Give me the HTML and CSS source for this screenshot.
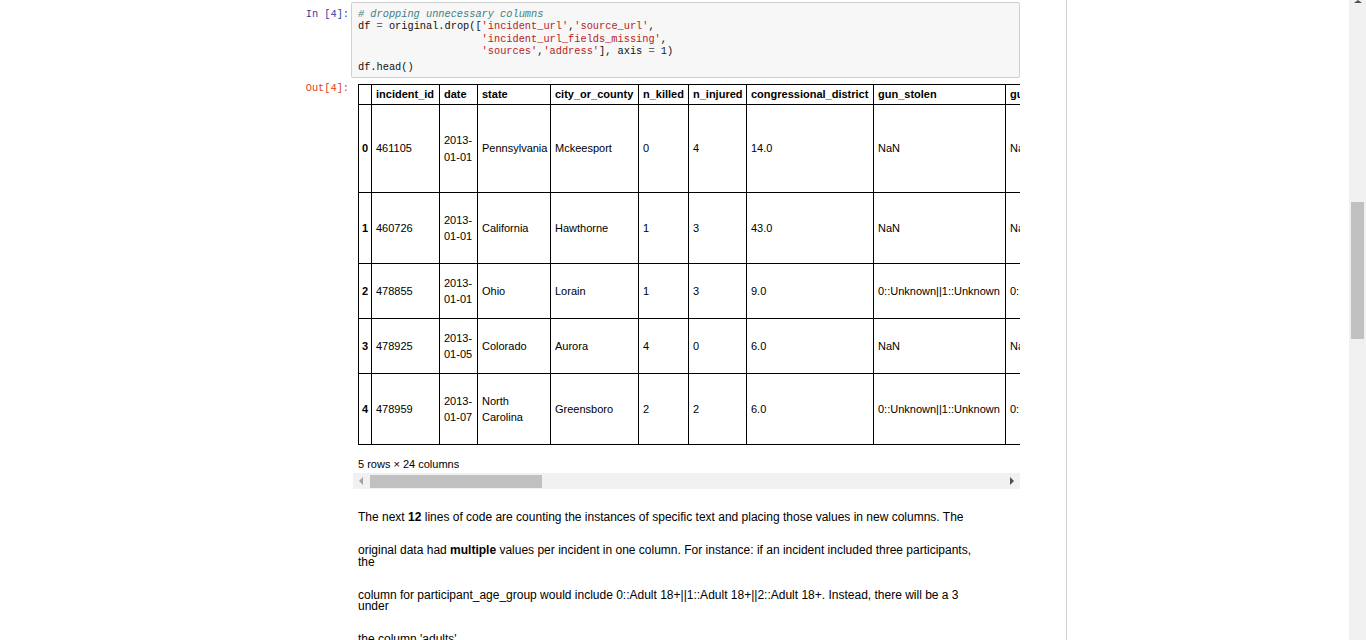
FILE: index.html
```html
<!DOCTYPE html>
<html lang="en">
<head>
<meta charset="utf-8">
<title>Notebook</title>
<link rel="stylesheet" href="styles.css">
</head>
<body>
<div class="screen">
  <div class="page">
    <div class="notebook">
      <div class="cell code-cell">
        <div class="row">
          <div class="prompt in-prompt">In&nbsp;[4]:</div>
          <div class="input-area"><pre><span class="c-com"># dropping unnecessary columns</span>
df <span class="c-op">=</span> original.drop([<span class="c-str">'incident_url'</span>,<span class="c-str">'source_url'</span>,
                    <span class="c-str">'incident_url_fields_missing'</span>,
                    <span class="c-str">'sources'</span>,<span class="c-str">'address'</span>], axis <span class="c-op">=</span> <span class="c-num">1</span>)<span class="last">df.head()</span></pre></div>
        </div>
        <div class="row output">
          <div class="prompt out-prompt">Out[4]:</div>
          <div class="output-area">
            <div class="df-scroll">
              <table class="dataframe">
                <colgroup>
                  <col class="w-idx"><col class="w-id"><col class="w-date"><col class="w-state"><col class="w-city"><col class="w-kill"><col class="w-inj"><col class="w-cong"><col class="w-stolen"><col class="w-type"><col class="w-lat">
                </colgroup>
                <thead>
                  <tr><th class="idx"></th><th>incident_id</th><th>date</th><th>state</th><th>city_or_county</th><th>n_killed</th><th>n_injured</th><th>congressional_district</th><th>gun_stolen</th><th>gun_type</th><th>latitude</th></tr>
                </thead>
                <tbody>
                  <tr><th class="idx">0</th><td>461105</td><td>2013-<wbr>01-01</td><td>Pennsylvania</td><td>Mckeesport</td><td>0</td><td>4</td><td>14.0</td><td>NaN</td><td>NaN</td><td>40.3467</td></tr>
                  <tr><th class="idx">1</th><td>460726</td><td>2013-<wbr>01-01</td><td>California</td><td>Hawthorne</td><td>1</td><td>3</td><td>43.0</td><td>NaN</td><td>NaN</td><td>33.9090</td></tr>
                  <tr><th class="idx">2</th><td>478855</td><td>2013-<wbr>01-01</td><td>Ohio</td><td>Lorain</td><td>1</td><td>3</td><td>9.0</td><td>0::Unknown||1::Unknown</td><td>0::Unknown||1::Unknown</td><td>41.4455</td></tr>
                  <tr><th class="idx">3</th><td>478925</td><td>2013-<wbr>01-05</td><td>Colorado</td><td>Aurora</td><td>4</td><td>0</td><td>6.0</td><td>NaN</td><td>NaN</td><td>39.6518</td></tr>
                  <tr><th class="idx">4</th><td>478959</td><td>2013-<wbr>01-07</td><td>North Carolina</td><td>Greensboro</td><td>2</td><td>2</td><td>6.0</td><td>0::Unknown||1::Unknown</td><td>0::Handgun||1::Handgun</td><td>36.1140</td></tr>
                </tbody>
              </table>
              <p class="df-shape">5 rows × 24 columns</p>
            </div>
            <div class="hscroll">
              <div class="hs-btn"><span class="arrow-left"></span></div>
              <div class="hs-thumb"></div>
              <div class="hs-btn hs-end"><span class="arrow-right"></span></div>
            </div>
          </div>
        </div>
      </div>
      <div class="row md-cell">
        <div class="prompt"></div>
        <div class="md">
          <p>The next <strong>12</strong> lines of code are counting the instances of specific text and placing those values in new columns. The</p>
          <p>original data had <strong>multiple</strong> values per incident in one column. For instance: if an incident included three participants, the</p>
          <p>column for participant_age_group would include 0::Adult 18+||1::Adult 18+||2::Adult 18+. Instead, there will be a 3 under</p>
          <p>the column 'adults'.</p>
          <p>This will make it easier to analyze the participants of each incident.</p>
        </div>
      </div>
    </div>
  </div>
  <div class="vscroll">
    <span class="arrow-up"></span>
    <div class="vs-thumb"></div>
  </div>
</div>
</body>
</html>
```

FILE: styles.css
```css
* { box-sizing: border-box; }

html, body {
  margin: 0;
  height: 100%;
}

body {
  overflow: hidden;
  background: #fff;
  font-family: "Liberation Sans", Arial, sans-serif;
  color: #000;
}

.screen {
  display: flex;
  height: 640px;
}

.page {
  flex: 1;
  min-width: 0;
  overflow: hidden;
}

.notebook {
  width: 1067px;
  height: 640px;
  border-right: 1px solid #d2d2d2;
  padding-top: 2px;
  padding-left: 250px;
}

.row {
  display: flex;
  align-items: flex-start;
}

.prompt {
  width: 101px;
  flex: none;
  padding-right: 2px;
  text-align: right;
  font-family: "Liberation Mono", monospace;
  font-size: 10.3px;
  line-height: 12.4px;
  white-space: nowrap;
}

.in-prompt {
  color: #303f9f;
  padding-top: 6px;
}

.out-prompt {
  color: #d84315;
  padding-top: 4px;
}

.input-area {
  width: 669px;
  background: #f7f7f7;
  border: 1px solid #cfcfcf;
  border-radius: 2px;
  padding: 5px 6px 3.5px;
}

.input-area pre {
  margin: 0;
  font-family: "Liberation Mono", monospace;
  font-size: 10.3px;
  line-height: 12.4px;
  color: #111;
}

.last {
  display: block;
  margin-top: 3.5px;
}

.c-com { color: #408080; font-style: italic; }
.c-str { color: #ba2121; }
.c-op { color: #666; }
.c-num { color: #222; }

.output-area {
  width: 669px;
  padding-top: 6px;
}

.df-scroll {
  margin-left: 2px;
  width: 667px;
  overflow: hidden;
  padding-left: 5px;
}

.dataframe {
  border-collapse: collapse;
  table-layout: fixed;
  width: 841px;
  font-size: 11px;
  line-height: 16.5px;
  color: #000;
}

.dataframe th,
.dataframe td {
  border: 1px solid #000;
  padding: 0 0 0 4px;
  text-align: left;
  vertical-align: middle;
  font-weight: normal;
}

.dataframe th { font-weight: bold; }
.dataframe .idx { padding-left: 3px; }

.dataframe thead tr { height: 20px; }
.dataframe tbody tr:nth-child(1) { height: 88px; }
.dataframe tbody tr:nth-child(2) { height: 71px; }
.dataframe tbody tr:nth-child(3) { height: 55px; }
.dataframe tbody tr:nth-child(4) { height: 55px; }
.dataframe tbody tr:nth-child(5) { height: 71px; }

.w-idx { width: 13px; }
.w-id { width: 68px; }
.w-date { width: 38px; }
.w-state { width: 73px; }
.w-city { width: 88px; }
.w-kill { width: 50px; }
.w-inj { width: 58px; }
.w-cong { width: 127px; }
.w-stolen { width: 132px; }
.w-type { width: 132px; }
.w-lat { width: 62px; }

.df-shape {
  margin: 12px 0 2px;
  font-size: 11px;
  line-height: 14px;
  color: #000;
}

.hscroll {
  margin-left: 2px;
  width: 667px;
  height: 16px;
  background: #f1f1f1;
  display: flex;
}

.hs-btn {
  width: 16px;
  flex: none;
  display: flex;
  align-items: center;
  justify-content: center;
}

.hs-end { margin-left: auto; }

.arrow-left {
  width: 0;
  height: 0;
  border-top: 4px solid transparent;
  border-bottom: 4px solid transparent;
  border-right: 4px solid #a3a3a3;
}

.arrow-right {
  width: 0;
  height: 0;
  border-top: 4px solid transparent;
  border-bottom: 4px solid transparent;
  border-left: 4px solid #505050;
}

.hs-thumb {
  width: 172px;
  height: 13px;
  margin: 2px 0 1px 1px;
  background: #c1c1c1;
}

.md-cell {
  margin-top: 23px;
}

.md {
  padding-left: 7px;
}

.md p {
  margin: 0 0 21.5px;
  max-width: 626px;
  font-size: 12px;
  line-height: 11.5px;
  color: #000;
}

.md strong { font-weight: bold; }

.vscroll {
  width: 17px;
  flex: none;
  background: #f1f1f1;
  display: flex;
  flex-direction: column;
  align-items: center;
}

.arrow-up {
  width: 0;
  height: 0;
  border-left: 4px solid transparent;
  border-right: 4px solid transparent;
  border-bottom: 3px solid #505050;
}

.vs-thumb {
  width: 13px;
  height: 137px;
  margin-top: 199px;
  background: #c1c1c1;
}
```
